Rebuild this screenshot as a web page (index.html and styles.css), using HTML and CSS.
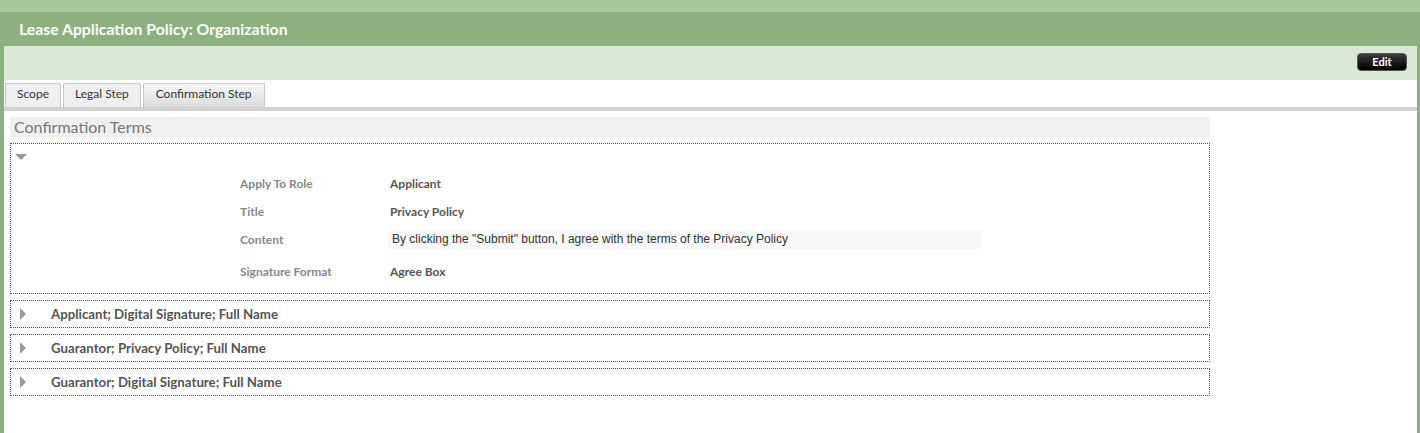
FILE: index.html
```html
<!DOCTYPE html>
<html>
<head>
    <meta charset="UTF-8">
    <title>Lease Application Policy: Organization</title>
    <link rel="stylesheet" href="styles.css">
</head>
<body>
    <div class="topband"></div>
    <div class="frame">
        <div class="header">Lease Application Policy: Organization</div>
        <div class="toolbar">
            <button class="editBtn">Edit</button>
        </div>
        <div class="tabs">
            <div class="tab">Scope</div>
            <div class="tab">Legal Step</div>
            <div class="tab active">Confirmation Step</div>
        </div>
        <div class="content">
            <div class="sectionTitle">Confirmation Terms</div>

            <div class="panel open">
                <div class="panelHead"><span class="arrowDown"></span></div>
                <div class="fields">
                    <div class="row">
                        <div class="label">Apply To Role</div>
                        <div class="value">Applicant</div>
                    </div>
                    <div class="row">
                        <div class="label">Title</div>
                        <div class="value">Privacy Policy</div>
                    </div>
                    <div class="row">
                        <div class="label">Content</div>
                        <div class="value text">By clicking the "Submit" button, I agree with the terms of the Privacy Policy</div>
                    </div>
                    <div class="row last">
                        <div class="label">Signature Format</div>
                        <div class="value">Agree Box</div>
                    </div>
                </div>
            </div>

            <div class="panel">
                <span class="arrowRight"></span>
                <span class="panelName">Applicant; Digital Signature; Full Name</span>
            </div>
            <div class="panel">
                <span class="arrowRight"></span>
                <span class="panelName">Guarantor; Privacy Policy; Full Name</span>
            </div>
            <div class="panel">
                <span class="arrowRight"></span>
                <span class="panelName">Guarantor; Digital Signature; Full Name</span>
            </div>
        </div>
    </div>
</body>
</html>
```

FILE: styles.css
```css
html, body {
    margin: 0;
    padding: 0;
    height: 100%;
    background: #ffffff;
    font-family: Lato, "Open Sans", sans-serif;
}

body {
    display: flex;
    flex-direction: column;
}

.topband {
    height: 12px;
    background-color: #a8c69b;
}

.frame {
    flex: 1;
    border-left: 4px solid #8db17e;
    border-right: 3px solid #8db17e;
    background: #ffffff;
}

.header {
    margin-left: -4px;
    margin-right: -3px;
    height: 34px;
    line-height: 33px;
    padding-left: 19px;
    background-color: #8db17e;
    color: #ffffff;
    font-size: 15.8px;
    font-weight: bold;
}

.toolbar {
    height: 34px;
    background-color: #dae8d6;
    display: flex;
    justify-content: flex-end;
    align-items: flex-start;
    padding-right: 10px;
}

.editBtn {
    margin-top: 7px;
    width: 50px;
    height: 18px;
    padding: 0;
    border: 1px solid #555;
    border-radius: 4px;
    background: linear-gradient(#3a3a3a, #000000);
    color: #ffffff;
    font-family: Lato, sans-serif;
    font-size: 11px;
    font-weight: bold;
    line-height: 16px;
}

.tabs {
    display: flex;
    gap: 2px;
    padding: 3px 0 0 1px;
    border-bottom: 4px solid #d2d2d2;
    height: 24px;
}

.tab {
    height: 23px;
    line-height: 20px;
    padding: 0 11px;
    border: 1px solid #c8c8c8;
    border-bottom: none;
    background-color: #efefef;
    color: #333333;
    font-size: 12px;
}

.tab.active {
    background: linear-gradient(#f7f7f7, #dcdcdc);
    padding: 0 12px;
}

.content {
    padding: 6px 0 0 6px;
    width: 1200px;
}

.sectionTitle {
    height: 20px;
    line-height: 20px;
    padding-left: 4px;
    background-color: #f0f0f0;
    color: #777777;
    font-size: 16px;
    margin-bottom: 6px;
}

.panel {
    border: 1px dotted #555555;
    margin-bottom: 6px;
    height: 26px;
    display: flex;
    align-items: center;
}

.panel.open {
    display: block;
    height: auto;
}

.panelHead {
    height: 22px;
    padding: 10px 0 0 4px;
    box-sizing: border-box;
}

.arrowDown {
    display: block;
    width: 0;
    height: 0;
    border-left: 6px solid transparent;
    border-right: 6px solid transparent;
    border-top: 6px solid #999999;
}

.arrowRight {
    display: inline-block;
    width: 0;
    height: 0;
    margin-left: 9px;
    border-top: 6px solid transparent;
    border-bottom: 6px solid transparent;
    border-left: 6px solid #999999;
}

.panelName {
    margin-left: 25px;
    color: #555555;
    font-size: 13.25px;
    font-weight: bold;
}

.fields {
    padding: 3px 0 4px 229px;
}

.row {
    display: flex;
    align-items: center;
    height: 28px;
}

.row.last {
    height: 36px;
    align-items: center;
}

.label {
    width: 150px;
    color: #888888;
    font-size: 12px;
    font-weight: bold;
}

.value {
    color: #555555;
    font-size: 12px;
    font-weight: bold;
}

.value.text {
    margin-left: -2px;
    width: 590px;
    height: 19px;
    line-height: 19px;
    padding-left: 4px;
    background-color: #f8f8f8;
    color: #333333;
    font-family: "Liberation Sans", Arial, sans-serif;
    font-weight: normal;
}
```
